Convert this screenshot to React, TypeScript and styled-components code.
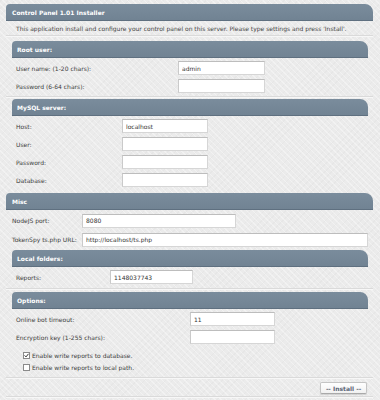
import React from "react";
import styled, { createGlobalStyle } from "styled-components";

const Global = createGlobalStyle`
  html, body { margin: 0; padding: 0; }
  body {
    background-color: #ebebeb;
    background-image:
      repeating-linear-gradient(45deg, rgba(255,255,255,0.35) 0 1px, transparent 1px 4px),
      repeating-linear-gradient(-45deg, rgba(0,0,0,0.018) 0 1px, transparent 1px 5px);
    font-family: "DejaVu Sans", Verdana, sans-serif;
    font-size: 6px;
    color: #3a3a3a;
  }
`;

const Page = styled.div`
  width: 380px;
  height: 400px;
  box-sizing: border-box;
  padding: 4px 7px 0 6px;
  display: flex;
  flex-direction: column;
`;

const Bar = styled.div<{ $outer?: boolean; $mt?: number }>`
  height: 17px;
  margin-top: ${(p) => p.$mt ?? 0}px;
  box-sizing: border-box;
  background: linear-gradient(#7a8c9c, #718393);
  border-bottom: 1px solid #5f7080;
  border-radius: 4px 8px 0 0;
  color: #fff;
  font-weight: bold;
  display: flex;
  align-items: center;
  padding-left: ${(p) => (p.$outer ? 6 : 5)}px;
`;

const Desc = styled.div`
  height: 14px;
  display: flex;
  align-items: center;
  padding-left: 10px;
  color: #444;
`;

const Divider = styled.div<{ $mt?: number; $mb?: number }>`
  height: 0;
  border-top: 1px solid #dadada;
  border-bottom: 1px solid #f7f7f7;
  margin-top: ${(p) => p.$mt ?? 0}px;
  margin-bottom: ${(p) => p.$mb ?? 0}px;
`;

const Section = styled.div<{ $mt?: number }>`
  margin: ${(p) => p.$mt ?? 0}px 5px 0 6px;
  display: flex;
  flex-direction: column;
`;

const Rows = styled.div<{ $pad: number }>`
  display: flex;
  flex-direction: column;
  padding-top: 1px;
  padding-left: ${(p) => p.$pad}px;
`;

const Row = styled.div<{ $label: number; $h?: number }>`
  display: grid;
  grid-template-columns: ${(p) => p.$label}px auto;
  align-items: center;
  height: ${(p) => p.$h ?? 18}px;
`;

const Label = styled.span`
  color: #3d3d3d;
  white-space: nowrap;
`;

const Field = styled.input<{ $w: number }>`
  width: ${(p) => p.$w}px;
  height: 14px;
  box-sizing: border-box;
  margin: 0;
  padding: 0 3px;
  background: #fff;
  border: 1px solid #d6d6d6;
  border-top-color: #bdbdbd;
  border-left-color: #cacaca;
  font-family: inherit;
  font-size: 6px;
  color: #333;
  outline: none;
`;

const Checks = styled.div`
  display: flex;
  flex-direction: column;
  padding: 3px 0 0 11px;
`;

const CheckRow = styled.label`
  display: flex;
  align-items: center;
  height: 12px;
  gap: 2px;
  color: #3d3d3d;
`;

const Box = styled.span<{ $on?: boolean }>`
  width: 7px;
  height: 7px;
  box-sizing: border-box;
  border: 1px solid #8a8a8a;
  background: #fff;
  display: inline-flex;
  align-items: center;
  justify-content: center;
`;

const Footer = styled.div`
  display: flex;
  justify-content: flex-end;
  padding: 3px 6px 2px 0;
`;

const Button = styled.button`
  width: 47px;
  height: 12px;
  box-sizing: border-box;
  padding: 0;
  background: linear-gradient(#ffffff, #f1f1f1);
  border: 1px solid #c4c4c4;
  border-bottom-color: #a9a9a9;
  border-radius: 2px;
  font-family: inherit;
  font-size: 6px;
  font-weight: bold;
  color: #5a6575;
  box-shadow: 0 1px 1px rgba(0,0,0,0.12);
`;

const Check = ({ on, children }: { on?: boolean; children: React.ReactNode }) => (
  <CheckRow>
    <Box $on={on}>
      {on && (
        <svg width="5" height="5" viewBox="0 0 5 5">
          <path d="M0.6 2.4 L2 3.9 L4.5 0.8" fill="none" stroke="#333" strokeWidth="1" />
        </svg>
      )}
    </Box>
    {children}
  </CheckRow>
);

export default function App() {
  return (
    <>
      <Global />
      <Page>
        <Bar $outer>Control Panel 1.01 Installer</Bar>
        <Desc>This application install and configure your control panel on this server. Please type settings and press 'Install'.</Desc>
        <Divider />

        <Section $mt={4}>
          <Bar>Root user:</Bar>
          <Rows $pad={4}>
            <Row $label={162}>
              <Label>User name: (1-20 chars):</Label>
              <Field $w={87} defaultValue="admin" />
            </Row>
            <Row $label={162}>
              <Label>Password (6-64 chars):</Label>
              <Field $w={87} type="text" defaultValue="" />
            </Row>
          </Rows>
        </Section>
        <Divider $mt={1} />

        <Section $mt={1}>
          <Bar>MySQL server:</Bar>
          <Rows $pad={4}>
            <Row $label={106}>
              <Label>Host:</Label>
              <Field $w={86} defaultValue="localhost" />
            </Row>
            <Row $label={106}>
              <Label>User:</Label>
              <Field $w={86} defaultValue="" />
            </Row>
            <Row $label={106}>
              <Label>Password:</Label>
              <Field $w={86} defaultValue="" />
            </Row>
            <Row $label={106}>
              <Label>Database:</Label>
              <Field $w={86} defaultValue="" />
            </Row>
          </Rows>
        </Section>

        <Bar $outer $mt={4}>Misc</Bar>
        <Rows $pad={6}>
          <Row $label={70} $h={19}>
            <Label>NodeJS port:</Label>
            <Field $w={154} defaultValue="8080" />
          </Row>
          <Row $label={70} $h={19}>
            <Label>TokenSpy ts.php URL:</Label>
            <Field $w={286} defaultValue="http://localhost/ts.php" />
          </Row>
        </Rows>

        <Section $mt={1}>
          <Bar>Local folders:</Bar>
          <Rows $pad={4}>
            <Row $label={94}>
              <Label>Reports:</Label>
              <Field $w={83} defaultValue="1148037743" />
            </Row>
          </Rows>
        </Section>
        <Divider $mt={2} />

        <Section $mt={2}>
          <Bar>Options:</Bar>
          <Rows $pad={4}>
            <Row $label={174}>
              <Label>Online bot timeout:</Label>
              <Field $w={85} defaultValue="11" />
            </Row>
            <Row $label={174}>
              <Label>Encryption key (1-255 chars):</Label>
              <Field $w={85} defaultValue="" />
            </Row>
          </Rows>
          <Checks>
            <Check on>Enable write reports to database.</Check>
            <Check>Enable write reports to local path.</Check>
          </Checks>
        </Section>
        <Divider $mt={4} />
        <Footer>
          <Button>-- Install --</Button>
        </Footer>
        <Divider />
      </Page>
    </>
  );
}
